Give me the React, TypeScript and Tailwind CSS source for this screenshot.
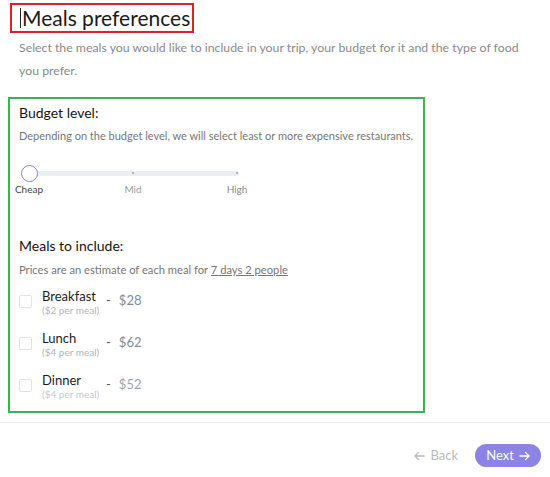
import React from "react";

const font = { fontFamily: "Lato, 'Noto Sans', sans-serif" };

function Arrow({ className }: { className?: string }) {
  return (
    <svg viewBox="0 0 12 10" className={className} fill="none" stroke="currentColor" strokeWidth="1.4" strokeLinecap="round" strokeLinejoin="round">
      <path d="M1 5h10M7 1l4 4-4 4" />
    </svg>
  );
}

function MealRow({ name, sub, price, faded }: { name: string; sub: string; price: string; faded?: boolean }) {
  return (
    <div className="flex h-[42px] items-start">
      <div className="mt-[7px] h-[13px] w-[13px] rounded-[2px] border border-[#e3e3e3] bg-white" />
      <div className="ml-[10px] flex w-[64px] flex-col">
        <span className="text-[13px] leading-[16px] text-[#1c1c1c]">{name}</span>
        <span className={`text-[10px] leading-[12px] ${faded ? "text-[#c8c8c8]" : "text-[#b3b3b3]"}`}>{sub}</span>
      </div>
      <span className="mt-[4px] text-[13px] leading-[16px] text-[#555]">-</span>
      <span className={`ml-[8px] mt-[4px] text-[13px] leading-[16px] ${faded ? "text-[#9aa6b1]" : "text-[#7f8c98]"}`}>{price}</span>
    </div>
  );
}

export default function App() {
  return (
    <div className="h-[477px] w-[550px] overflow-hidden bg-white" style={font}>
      <div className="ml-[10px] mt-[3px] flex h-[30px] w-[184px] items-center border-2 border-[#d9232b] pl-[8px]">
        <span className="mr-[1px] h-[20px] w-[1px] shrink-0 bg-[#222]" />
        <span className="whitespace-nowrap text-[21px] leading-[26px] text-[#1a1a1a]">Meals preferences</span>
      </div>

      <p className="mt-[3px] pl-[19px] pr-[10px] text-[12.3px] leading-[23px] text-[#8a8a8a]">
        Select the meals you would like to include in your trip, your budget for it and the type of food you prefer.
      </p>

      <div className="ml-[8px] mt-[15px] h-[316px] w-[417px] border-2 border-[#3db255] pl-[9px] pt-[4px]">
        <div className="text-[14px] leading-[20px] text-[#141414]">Budget level:</div>
        <div className="mt-[5px] text-[11px] leading-[16px] text-[#777]">
          Depending on the budget level, we will select least or more expensive restaurants.
        </div>

        <div className="relative ml-[10px] mt-[20px] h-[31px] w-[210px]">
          <div className="absolute left-0 right-0 top-[7px] h-[5px] rounded-full bg-[#e9eef4]" />
          <div className="absolute left-[103px] top-[8px] h-[2px] w-[2px] rounded-full bg-[#9aa3ad]" />
          <div className="absolute left-[207px] top-[8px] h-[2px] w-[2px] rounded-full bg-[#9aa3ad]" />
          <div className="absolute left-[-8px] top-[1px] h-[17px] w-[17px] rounded-full border-[1.5px] border-[#8a7fd8] bg-white" />
          <span className="absolute left-0 top-[19px] -translate-x-1/2 text-[10px] leading-[12px] text-[#444]">Cheap</span>
          <span className="absolute left-[104px] top-[19px] -translate-x-1/2 text-[10px] leading-[12px] text-[#9a9a9a]">Mid</span>
          <span className="absolute left-[208px] top-[19px] -translate-x-1/2 text-[10px] leading-[12px] text-[#8a8a8a]">High</span>
        </div>

        <div className="mt-[41px] text-[14px] leading-[20px] text-[#141414]">Meals to include:</div>
        <div className="mt-[6px] text-[11.2px] leading-[16px] text-[#777]">
          Prices are an estimate of each meal for <span className="underline">7 days 2 people</span>
        </div>

        <div className="mt-[10px] flex flex-col">
          <MealRow name="Breakfast" sub="($2 per meal)" price="$28" />
          <MealRow name="Lunch" sub="($4 per meal)" price="$62" />
          <MealRow name="Dinner" sub="($4 per meal)" price="$52" faded />
        </div>
      </div>

      <div className="mt-[9px] h-px w-full bg-[#ececec]" />

      <div className="flex items-center justify-end pr-[9px] pt-[21px]">
        <button className="flex items-center gap-[5px] text-[13px] text-[#b9b9b9]">
          <Arrow className="h-[10px] w-[11px] rotate-180" />
          Back
        </button>
        <button className="ml-[17px] flex h-[23px] w-[66px] items-center justify-center gap-[5px] rounded-full bg-[#8b84e4] text-[13px] text-white">
          Next
          <Arrow className="h-[10px] w-[11px]" />
        </button>
      </div>
    </div>
  );
}
